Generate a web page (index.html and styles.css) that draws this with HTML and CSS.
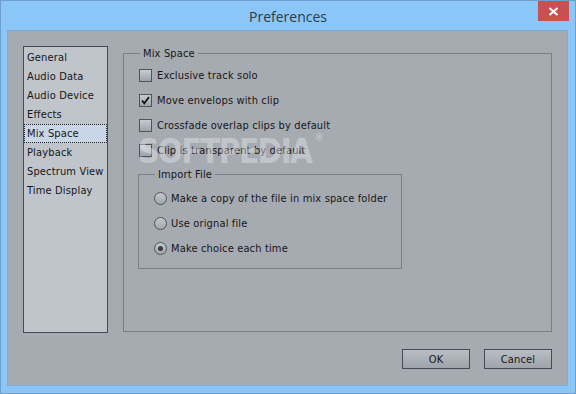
FILE: index.html
```html
<!DOCTYPE html>
<html>
<head>
<meta charset="utf-8">
<link rel="stylesheet" href="styles.css">
</head>
<body>
<div class="window">
  <div class="titlebar">
    <div class="title">Preferences</div>
    <div class="close">
      <svg width="11" height="9" viewBox="0 0 11 9"><path d="M1.5 1 L9.5 8 M9.5 1 L1.5 8" stroke="#fff" stroke-width="2"/></svg>
    </div>
  </div>
  <div class="client">
    <div class="main">
      <ul class="list">
        <li>General</li>
        <li>Audio Data</li>
        <li>Audio Device</li>
        <li>Effects</li>
        <li class="sel">Mix Space</li>
        <li>Playback</li>
        <li>Spectrum View</li>
        <li>Time Display</li>
      </ul>
      <div class="group">
        <div class="legend">Mix Space</div>
        <div class="opt"><span class="cb"></span>Exclusive track solo</div>
        <div class="opt"><span class="cb"><svg width="11" height="11" viewBox="0 0 11 11"><path d="M2 5.5 L4.3 8.3 L9 2" fill="none" stroke="#111" stroke-width="1.8"/></svg></span>Move envelops with clip</div>
        <div class="opt"><span class="cb"></span>Crossfade overlap clips by default</div>
        <div class="opt"><span class="cb"></span>Clip is transparent by default</div>
        <div class="import">
          <div class="legend">Import File</div>
          <div class="opt"><span class="rb"></span>Make a copy of the file in mix space folder</div>
          <div class="opt"><span class="rb"></span>Use orignal file</div>
          <div class="opt"><span class="rb on"></span>Make choice each time</div>
        </div>
        <div class="watermark">SOFTPEDIA<sup>®</sup></div>
      </div>
    </div>
    <div class="buttons">
      <div class="btn">OK</div>
      <div class="btn">Cancel</div>
    </div>
  </div>
</div>
</body>
</html>
```

FILE: styles.css
```css
* { box-sizing: border-box; }
html, body { margin: 0; padding: 0; }
body { width: 576px; height: 394px; overflow: hidden; font-family: "DejaVu Sans Condensed", "DejaVu Sans", sans-serif; font-size: 11px; letter-spacing: 0.15px; color: #161616; }
.window { width: 576px; height: 394px; background: #8bc6f9; border: 1px solid #6e9ed0; display: flex; flex-direction: column; }
.titlebar { height: 29px; position: relative; display: flex; justify-content: center; align-items: center; }
.title { font-family: "Open Sans", sans-serif; font-size: 14px; letter-spacing: 0; color: #2f3a44; margin-top: 1px; }
.close { position: absolute; top: 0; right: 6px; width: 31px; height: 20px; background: #c75050; display: flex; align-items: center; justify-content: center; }
.client { margin: 0 7px 0 6px; height: 356px; background: #a6abb2; border: 1px solid #7aaee0; border-top-color: #7ba9d6; padding: 15px 15px 0 15px; }
.main { display: flex; align-items: flex-start; height: 287px; }
.list { list-style: none; margin: 0; padding: 1px 0 0 0; width: 85px; height: 287px; background: #c0c5cc; border: 1px solid #474a52; }
.list li { height: 19px; line-height: 19px; padding-left: 3px; white-space: nowrap; }
.list li.sel { background: #c8d6e7; outline: 1px dotted #222; outline-offset: -1px; }
.group { position: relative; margin-left: 15px; margin-top: 7px; width: 429px; height: 279px; border: 1px solid #7b7e85; padding: 9px 0 0 14px; }
.legend { position: absolute; top: -8px; left: 16px; padding: 0 3px; background: #a6abb2; line-height: 15px; }
.opt { height: 25px; display: flex; align-items: center; white-space: nowrap; }
.group > .opt { margin-left: 1px; }
.cb { width: 13px; height: 13px; border: 1px solid #50535a; background: linear-gradient(#c8ccd2, #9ea3aa); margin-right: 5px; display: flex; align-items: center; justify-content: center; }
.rb { width: 13px; height: 13px; border: 1px solid #50535a; border-radius: 50%; background: linear-gradient(#c4c8ce, #a2a7ae); margin-right: 4px; display: flex; align-items: center; justify-content: center; }
.rb.on::after { content: ""; width: 5px; height: 5px; border-radius: 50%; background: #3a3d44; }
.import { position: relative; margin-top: 11px; width: 264px; height: 95px; border: 1px solid #7b7e85; padding: 11px 0 0 15px; }
.watermark { position: absolute; left: 14px; top: 78px; font-family: "DejaVu Sans Condensed", "DejaVu Sans", sans-serif; font-weight: bold; font-size: 33px; letter-spacing: -1.6px; color: rgba(228, 230, 233, 0.45); pointer-events: none; }
.watermark sup { font-size: 10px; vertical-align: top; margin-left: 3px; }
.buttons { display: flex; justify-content: flex-end; gap: 14px; margin-top: 16px; }
.btn { width: 68px; height: 20px; border: 1px solid #474a52; background: linear-gradient(#b9bec5, #9fa4ab); display: flex; align-items: center; justify-content: center; }
```
